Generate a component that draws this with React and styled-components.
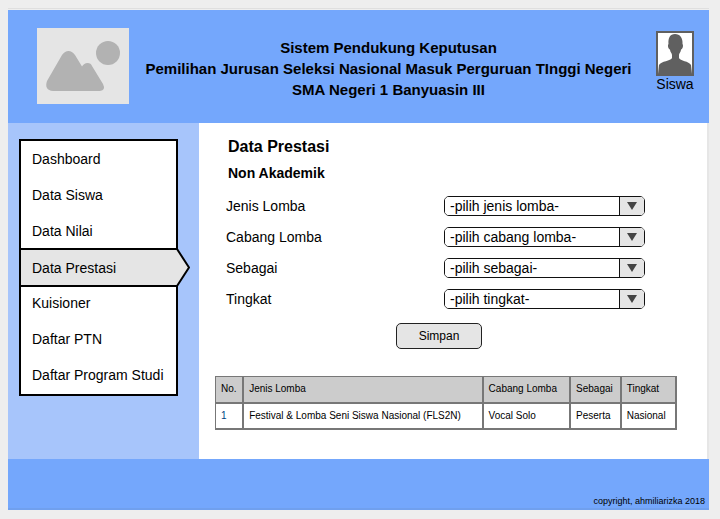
import React from "react";
import styled, { createGlobalStyle } from "styled-components";

const GlobalStyle = createGlobalStyle`
  *, *::before, *::after { box-sizing: border-box; }
  body {
    margin: 0;
    background: #eeeeee;
    color: #000;
    font: 14px/16px "Liberation Sans", Arial, sans-serif;
  }
`;

const Page = styled.div`
  display: flex;
  flex-direction: column;
  min-height: calc(100vh - 17px);
  margin: 8px 11px 9px 8px;
  border-top: 1px solid #dfdfdf;
  padding-top: 1px;
`;

const Header = styled.header`
  display: flex;
  align-items: center;
  min-height: 113px;
  padding: 0 15px 0 29px;
  background: #74a7fc;
`;

const LogoArt = styled.svg`
  flex: none;
  width: 92px;
  height: 76px;
  margin-bottom: 2px;
`;

const SiteTitle = styled.h1`
  flex: 1;
  margin: 0;
  padding: 4px 8px 0 0;
  font-size: 15px;
  font-weight: bold;
  line-height: 21px;
  text-align: center;
`;

const User = styled.figure`
  display: flex;
  flex-direction: column;
  align-items: center;
  margin: 0 0 10px;
`;

const Portrait = styled.svg`
  width: 38px;
  height: 45px;
`;

const UserName = styled.figcaption`
  line-height: 16px;
`;

const Body = styled.div`
  display: flex;
  flex: 1;
`;

const Sidebar = styled.aside`
  flex: none;
  width: 191px;
  padding: 16px 21px 16px 11px;
  background: #a7c5fb;
`;

const Menu = styled.ul`
  margin: 0;
  padding: 0 0 1px;
  border: 2px solid #000;
  background: #fff;
  list-style: none;
`;

const MenuItem = styled.li`
  position: relative;
  display: flex;
  height: ${(p) => (p.$active ? 39 : 36)}px;
  margin: ${(p) => (p.$active ? "-1px 0 -2px" : "0")};
  border: solid #000;
  border-width: ${(p) => (p.$active ? "2px 0" : "0")};
  background: ${(p) => (p.$active ? "#e5e5e5" : "transparent")};
`;

const MenuLink = styled.a`
  flex: 1;
  align-self: center;
  padding-left: 11px;
  color: inherit;
  text-decoration: none;
  white-space: nowrap;
`;

const Pointer = styled.svg`
  position: absolute;
  top: -2px;
  right: -14px;
  width: 14px;
  height: 39px;
`;

const Main = styled.main`
  flex: 1;
  padding: 14px 30px 28px 16px;
  border-right: 2px solid #e6e6e6;
  background: #fff;
`;

const Title = styled.h2`
  margin: 0 0 8px 13px;
  font-size: 16px;
  line-height: 20px;
`;

const Subtitle = styled.h3`
  margin: 0 0 15px 13px;
  font-size: 14px;
  line-height: 16px;
`;

const Form = styled.form`
  display: flex;
  flex-direction: column;
  gap: 11px;
  margin: 0 32px 27px 11px;
`;

const Field = styled.div`
  display: flex;
  align-items: center;
  justify-content: space-between;
`;

const SelectBox = styled.div`
  position: relative;
  width: 201px;
  height: 20px;
  border: 1px solid #111;
  border-radius: 5px;
  overflow: hidden;
`;

const Select = styled.select`
  display: block;
  width: 100%;
  height: 100%;
  padding: 0 30px 0 5px;
  border: 0;
  appearance: none;
  background: #fff;
  color: #000;
  font: inherit;
`;

const Arrow = styled.svg`
  position: absolute;
  top: 0;
  right: 0;
  width: 25px;
  height: 18px;
  pointer-events: none;
`;

const SubmitButton = styled.button`
  align-self: center;
  width: 86px;
  height: 26px;
  margin: 3px 0 0 7px;
  padding: 0 0 1px;
  border: 1px solid #222;
  border-radius: 5px;
  background: #e5e5e5;
  color: #000;
  font: 12px/16px "Liberation Sans", Arial, sans-serif;
`;

const Table = styled.table`
  width: 100%;
  border-collapse: collapse;
  table-layout: fixed;
  font-size: 10px;
  line-height: 12px;
  text-align: left;
  white-space: nowrap;
`;

const Column = styled.col`
  width: ${(p) => p.$share}%;
`;

const cell = `
  height: 26px;
  padding: 0 0 0 5px;
  border: solid #777;
`;

const HeadCell = styled.th`
  ${cell}
  border-width: 1px 2px 2px;
  background: #cccccc;
  font-weight: normal;

  &:first-child { border-left-width: 1px; }
`;

const Cell = styled.td`
  ${cell}
  border-width: 2px;

  &:first-child {
    border-left-width: 1px;
    color: #003f7f;
  }
`;

const Footer = styled.footer`
  display: flex;
  align-items: flex-end;
  justify-content: flex-end;
  height: 51px;
  padding: 0 4px 1px;
  border-bottom: 2px solid #70a0ee;
  background: #74a7fc;
  font-size: 9px;
  line-height: 12px;
`;

const menu = [
  "Dashboard",
  "Data Siswa",
  "Data Nilai",
  "Data Prestasi",
  "Kuisioner",
  "Daftar PTN",
  "Daftar Program Studi",
];

const fields = [
  { id: "jenis", label: "Jenis Lomba", hint: "-pilih jenis lomba-" },
  { id: "cabang", label: "Cabang Lomba", hint: "-pilih cabang lomba-" },
  { id: "sebagai", label: "Sebagai", hint: "-pilih sebagai-" },
  { id: "tingkat", label: "Tingkat", hint: "-pilih tingkat-" },
];

const columns = [
  { name: "No.", share: 6 },
  { name: "Jenis Lomba", share: 52 },
  { name: "Cabang Lomba", share: 19 },
  { name: "Sebagai", share: 11 },
  { name: "Tingkat", share: 12 },
];

const rows = [
  ["1", "Festival & Lomba Seni Siswa Nasional (FLS2N)", "Vocal Solo", "Peserta", "Nasional"],
];

function Logo() {
  return (
    <LogoArt viewBox="0 0 92 76" role="img" aria-label="Logo">
      <path fill="#e5e5e5" d="M0 0h92v76H0z" />
      <circle cx="71" cy="25" r="12" fill="#b2b2b2" />
      <path
        fill="#b2b2b2"
        d="M10 53 25 27Q28 23 31.500 23T38 27L45 38.500Q47 35 50.500 35T55 38L66 56Q69 62 63 63H16Q7 62 10 53Z"
      />
    </LogoArt>
  );
}

function Avatar() {
  return (
    <Portrait viewBox="0 0 38 45" aria-hidden="true">
      <path fill="#606060" d="M0 0h38v45H0z" />
      <path fill="#fff" d="M2 2h34v41H2z" />
      <path
        fill="#606060"
        d="M19 3C14 3 12 7 12.500 13C11.500 14 12 18 14 18.500C14 21 16 22 16 24V27C15 30 5 30 3 34L2 43H36L35 34C33 30 24 30 23 27V24C23 22 25 21 25 18.500C27 18 27.500 14 26.500 13C27 7 24 3 19 3Z"
      />
    </Portrait>
  );
}

export default function App() {
  return (
    <>
      <GlobalStyle />
      <Page>
        <Header>
          <Logo />
          <SiteTitle>
            Sistem Pendukung Keputusan
            <br />
            Pemilihan Jurusan Seleksi Nasional Masuk Perguruan TInggi Negeri
            <br />
            SMA Negeri 1 Banyuasin III
          </SiteTitle>
          <User>
            <Avatar />
            <UserName>Siswa</UserName>
          </User>
        </Header>
        <Body>
          <Sidebar>
            <nav>
              <Menu>
                {menu.map((name) => {
                  const active = name === "Data Prestasi";
                  return (
                    <MenuItem key={name} $active={active}>
                      <MenuLink href="#" aria-current={active ? "page" : undefined}>
                        {name}
                      </MenuLink>
                      {active && (
                        <Pointer viewBox="0 0 14 39" aria-hidden="true">
                          <path fill="#e5e5e5" d="M0 2H2L13 19.500 2 37H0z" />
                          <path fill="none" stroke="#000" strokeWidth="2" d="M0 1H1L13 19.500 1 38H0" />
                        </Pointer>
                      )}
                    </MenuItem>
                  );
                })}
              </Menu>
            </nav>
          </Sidebar>
          <Main>
            <Title>Data Prestasi</Title>
            <Subtitle>Non Akademik</Subtitle>
            <Form onSubmit={(e) => e.preventDefault()}>
              {fields.map((f) => (
                <Field key={f.id}>
                  <label htmlFor={f.id}>{f.label}</label>
                  <SelectBox>
                    <Select id={f.id}>
                      <option>{f.hint}</option>
                    </Select>
                    <Arrow viewBox="0 0 25 18" aria-hidden="true">
                      <path fill="#e5e5e5" d="M0 0h25v18H0z" />
                      <path fill="#111" d="M0 0h1v18H0z" />
                      <path fill="#444" d="M8 5h10l-5 8z" />
                    </Arrow>
                  </SelectBox>
                </Field>
              ))}
              <SubmitButton type="submit">Simpan</SubmitButton>
            </Form>
            <Table>
              <colgroup>
                {columns.map((c) => (
                  <Column key={c.name} $share={c.share} />
                ))}
              </colgroup>
              <thead>
                <tr>
                  {columns.map((c) => (
                    <HeadCell key={c.name} scope="col">{c.name}</HeadCell>
                  ))}
                </tr>
              </thead>
              <tbody>
                {rows.map((row) => (
                  <tr key={row[0]}>
                    {row.map((value) => (
                      <Cell key={value}>{value}</Cell>
                    ))}
                  </tr>
                ))}
              </tbody>
            </Table>
          </Main>
        </Body>
        <Footer>copyright, ahmiliarizka 2018</Footer>
      </Page>
    </>
  );
}
